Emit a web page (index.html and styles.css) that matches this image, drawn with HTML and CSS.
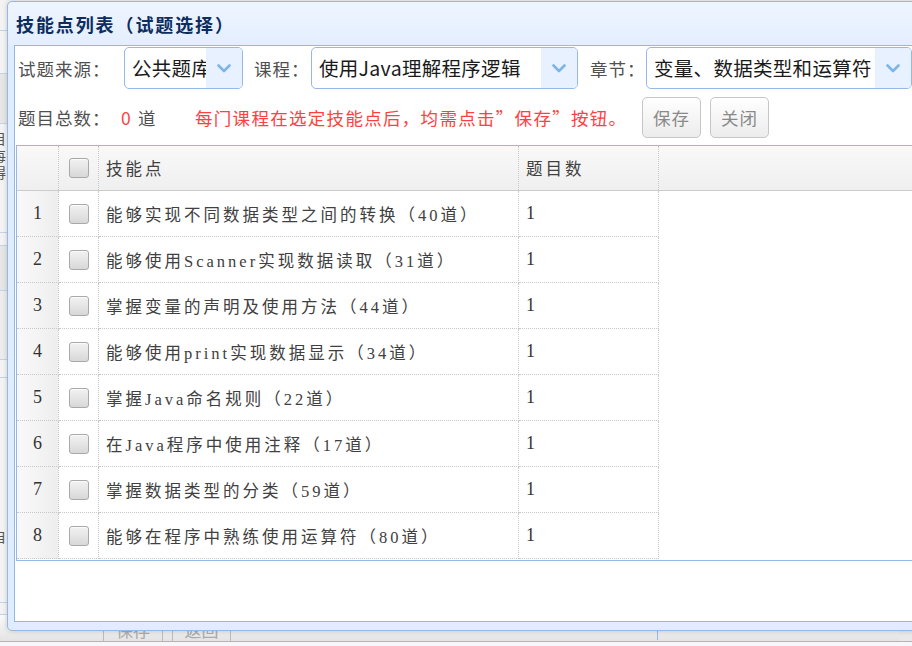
FILE: index.html
```html
<!DOCTYPE html>
<html lang="zh-CN">
<head>
<meta charset="utf-8">
<title>技能点列表</title>
<link rel="stylesheet" href="styles.css">
</head>
<body>
<div class="bg">
  <div class="bg-row h31"></div>
  <div class="bg-row h43"></div>
  <div class="bg-row h50 grey"></div>
  <div class="bg-row h109"><div class="bg-text">目<br>每<br>得</div></div>
  <div class="bg-row h13"></div>
  <div class="bg-row h45 grey"></div>
  <div class="bg-row h69 grey2"></div>
  <div class="bg-row h18"></div>
  <div class="bg-row h225"><div class="bg-text low">自</div></div>
  <div class="bg-row h12"></div>
  <div class="bg-toolbar">
    <span class="bg-btn b1">保存</span>
    <span class="bg-btn b2">返回</span>
    <span class="bg-sep"></span>
    <span class="bg-end"></span>
  </div>
  <div class="bg-foot"></div>
</div>

<div class="dialog">
  <div class="dlg-header"><span class="dlg-title">技能点列表（试题选择）</span></div>
  <div class="dlg-body">
    <div class="form-row row1">
      <span class="lbl w106">试题来源：</span>
      <div class="combo c1">
        <span class="combo-text">公共题库</span>
        <span class="combo-arrow"><svg width="14" height="9" viewBox="0 0 14 9"><path d="M1.5 1.5 L7 7 L12.5 1.5" fill="none" stroke="#7DB5E9" stroke-width="2.6" stroke-linecap="round" stroke-linejoin="round"/></svg></span>
      </div>
      <span class="lbl w57">课程：</span>
      <div class="combo c2">
        <span class="combo-text">使用Java理解程序逻辑</span>
        <span class="combo-arrow"><svg width="14" height="9" viewBox="0 0 14 9"><path d="M1.5 1.5 L7 7 L12.5 1.5" fill="none" stroke="#7DB5E9" stroke-width="2.6" stroke-linecap="round" stroke-linejoin="round"/></svg></span>
      </div>
      <span class="lbl w56">章节：</span>
      <div class="combo c3">
        <span class="combo-text">变量、数据类型和运算符</span>
        <span class="combo-arrow"><svg width="14" height="9" viewBox="0 0 14 9"><path d="M1.5 1.5 L7 7 L12.5 1.5" fill="none" stroke="#7DB5E9" stroke-width="2.6" stroke-linecap="round" stroke-linejoin="round"/></svg></span>
      </div>
    </div>
    <div class="form-row row2">
      <span class="lbl w103">题目总数：</span>
      <span class="lbl red w17">0</span>
      <span class="lbl w57">道</span>
      <span class="notice">每门课程在选定技能点后，均需点击”保存”按钮。</span>
      <span class="btn">保存</span>
      <span class="btn">关闭</span>
    </div>
    <div class="grid">
      <div class="grid-head">
        <div class="cell rn"></div>
        <div class="cell ck"><span class="cb"></span></div>
        <div class="cell tx">技能点</div>
        <div class="cell tx">题目数</div>
        <div class="fill"></div>
      </div>
      <div class="grid-row"><div class="cell rn">1</div><div class="cell ck"><span class="cb"></span></div><div class="cell tx">能够实现不同数据类型之间的转换（40道）</div><div class="cell tx num">1</div><div class="fill"></div></div>
      <div class="grid-row"><div class="cell rn">2</div><div class="cell ck"><span class="cb"></span></div><div class="cell tx">能够使用Scanner实现数据读取（31道）</div><div class="cell tx num">1</div><div class="fill"></div></div>
      <div class="grid-row"><div class="cell rn">3</div><div class="cell ck"><span class="cb"></span></div><div class="cell tx">掌握变量的声明及使用方法（44道）</div><div class="cell tx num">1</div><div class="fill"></div></div>
      <div class="grid-row"><div class="cell rn">4</div><div class="cell ck"><span class="cb"></span></div><div class="cell tx">能够使用print实现数据显示（34道）</div><div class="cell tx num">1</div><div class="fill"></div></div>
      <div class="grid-row"><div class="cell rn">5</div><div class="cell ck"><span class="cb"></span></div><div class="cell tx">掌握Java命名规则（22道）</div><div class="cell tx num">1</div><div class="fill"></div></div>
      <div class="grid-row"><div class="cell rn">6</div><div class="cell ck"><span class="cb"></span></div><div class="cell tx">在Java程序中使用注释（17道）</div><div class="cell tx num">1</div><div class="fill"></div></div>
      <div class="grid-row"><div class="cell rn">7</div><div class="cell ck"><span class="cb"></span></div><div class="cell tx">掌握数据类型的分类（59道）</div><div class="cell tx num">1</div><div class="fill"></div></div>
      <div class="grid-row"><div class="cell rn">8</div><div class="cell ck"><span class="cb"></span></div><div class="cell tx">能够在程序中熟练使用运算符（80道）</div><div class="cell tx num">1</div><div class="fill"></div></div>
    </div>
  </div>
</div>
</body>
</html>
```

FILE: styles.css
```css
* { box-sizing: border-box; }
html, body {
  margin: 0;
  width: 912px;
  height: 646px;
  overflow: hidden;
}
body {
  position: relative;
  background: #fff;
  font-family: "Noto Sans CJK SC", sans-serif;
}

/* background page */
.bg {
  width: 912px;
  height: 646px;
  display: flex;
  flex-direction: column;
  background: #f3f3f3;
}
.bg-row {
  flex: none;
  border-bottom: 1px solid #c3d3ea;
  overflow: hidden;
}
.bg-row.grey { background: #e6e6e6; }
.bg-row.grey2 { background: #ececec; }
.h31 { height: 31px; }
.h43 { height: 43px; }
.h50 { height: 50px; }
.h109 { height: 109px; }
.h13 { height: 13px; }
.h45 { height: 45px; }
.h69 { height: 69px; }
.h18 { height: 18px; }
.h225 { height: 225px; }
.h12 { height: 12px; }
.bg-text {
  margin-left: -8px;
  padding-top: 6px;
  font-size: 14px;
  line-height: 17px;
  color: #555;
}
.bg-text.low { padding-top: 150px; }
.bg-toolbar {
  flex: none;
  height: 27px;
  display: flex;
  align-items: stretch;
  border-bottom: 1px solid #95b8e7;
  background: linear-gradient(#fafafa, #e4e4e4);
}
.bg-btn {
  display: flex;
  align-items: flex-end;
  justify-content: center;
  padding-bottom: 1px;
  border-left: 1px solid #bbb;
  border-right: 1px solid #bbb;
  font-size: 17px;
  line-height: 20px;
  color: #aaa;
}
.bg-btn.b1 { margin-left: 103px; width: 60px; }
.bg-btn.b2 { margin-left: 9px; width: 59px; }
.bg-sep {
  margin-left: 426px;
  margin-top: 16px;
  margin-bottom: 1px;
  width: 1px;
  background: #95b8e7;
}
.bg-end {
  margin-left: auto;
  width: 13px;
  margin-top: 15px;
  background: #e8e8e8;
}
.bg-foot {
  flex: 1;
  background: #f4f8fd;
}

/* dialog window */
.dialog {
  position: absolute;
  left: 7px;
  top: 1px;
  width: 940px;
  height: 630px;
  border: 1px solid #95b8e7;
  border-radius: 5px;
  background: #e0ecff;
  padding: 0 0 8px 6px;
  display: flex;
  flex-direction: column;
  box-shadow: 0 0 5px rgba(0, 0, 0, 0.18);
}
.dlg-header {
  flex: none;
  height: 43px;
  margin-left: -6px;
  padding-left: 8px;
  display: flex;
  align-items: center;
  background: linear-gradient(#eff5ff, #e3eeff);
  border-radius: 5px 5px 0 0;
}
.dlg-title {
  font-size: 18px;
  font-weight: bold;
  letter-spacing: 1.9px;
  color: #0e2d5f;
  line-height: 20px;
  padding-top: 1px;
}
.dlg-body {
  flex: none;
  height: 577px;
  border: 1px solid #95b8e7;
  background: #fff;
  overflow: hidden;
}

/* form rows */
.form-row {
  display: flex;
  align-items: center;
  height: 42px;
  padding-left: 3px;
}
.row1 { margin-top: 1px; }
.row2 { margin-top: 7px; }
.lbl {
  flex: none;
  font-size: 17.5px;
  letter-spacing: 1px;
  color: #505050;
  white-space: nowrap;
}
.lbl.red { color: #ff4040; }
.w106 { width: 106px; }
.w57 { width: 57px; }
.w56 { width: 56px; }
.w103 { width: 103px; }
.w17 { width: 17px; }
.combo {
  flex: none;
  height: 42px;
  display: flex;
  border: 1px solid #95b8e7;
  border-radius: 5px;
  overflow: hidden;
  background: #fff;
}
.c1 { width: 119px; margin-right: 11px; }
.c2 { width: 267px; margin-right: 12px; }
.c3 { width: 266px; }
.combo-text {
  flex: 1;
  min-width: 0;
  overflow: hidden;
  white-space: nowrap;
  padding-left: 7px;
  font-size: 19.5px;
  letter-spacing: 0.3px;
  line-height: 40px;
  color: #1a1a1a;
}
.combo-arrow {
  flex: none;
  width: 36px;
  display: flex;
  align-items: center;
  justify-content: center;
  background: #e8f1ff;
}
.notice {
  flex: none;
  width: 447px;
  font-size: 17.5px;
  letter-spacing: 1.3px;
  color: #ff4040;
  white-space: nowrap;
}
.btn {
  flex: none;
  width: 59px;
  height: 41px;
  margin-right: 9px;
  display: flex;
  align-items: center;
  justify-content: center;
  border: 1px solid #c6c6c6;
  border-radius: 5px;
  background: linear-gradient(#ffffff, #ececec);
  font-size: 17.5px;
  letter-spacing: 1px;
  color: #8a8a8a;
}

/* data grid */
.grid {
  margin: 7px 0 0 1px;
  border: 1px solid #95b8e7;
  border-right: none;
  padding-bottom: 1px;
}
.grid-head,
.grid-row {
  display: grid;
  grid-template-columns: 42px 40px 420px 140px 1fr;
}
.grid-head {
  height: 45px;
  border-bottom: 1px solid #cccccc;
  background: linear-gradient(#f9f9f9, #efefef);
}
.grid-row { height: 46px; }
.cell {
  display: flex;
  align-items: center;
  border-right: 1px dotted #c8c8c8;
  font-family: "Liberation Serif", "Noto Sans CJK SC", serif;
  font-size: 16.5px;
  letter-spacing: 3px;
  color: #404040;
  white-space: nowrap;
  overflow: hidden;
}
.grid-row .cell { border-bottom: 1px dotted #c8c8c8; }
.cell.tx { padding-left: 7px; }
.cell.num {
  font-size: 18px;
  letter-spacing: 0;
  color: #333;
}
.cell.rn {
  justify-content: center;
  font-size: 18px;
  letter-spacing: 0;
  color: #333;
}
.grid-row .cell.rn { background: linear-gradient(to right, #f9f9f9, #eeeeee); }
.cell.ck { justify-content: center; }
.cb {
  width: 20px;
  height: 20px;
  border: 1px solid #a9a9a9;
  border-radius: 3px;
  background: linear-gradient(#f2f2f2, #d8d8d8);
  box-shadow: inset 0 1px 0 #fbfbfb;
}
.fill { }
```
